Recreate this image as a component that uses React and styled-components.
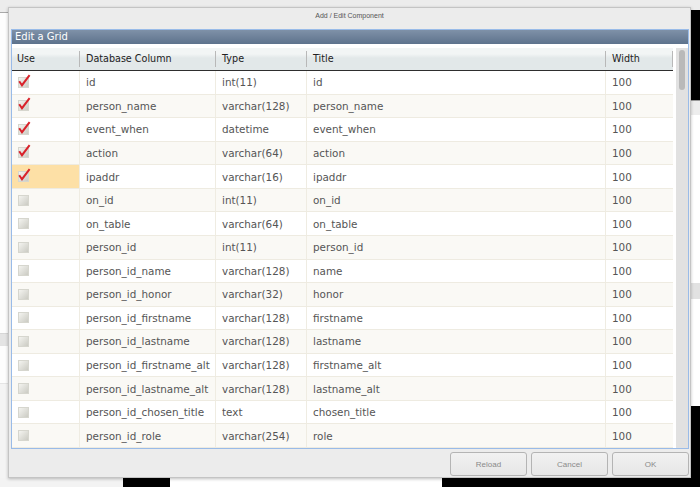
import React from "react";
import styled, { createGlobalStyle } from "styled-components";

const columns = [
  { key: "use", label: "Use", width: 68 },
  { key: "name", label: "Database Column", width: 136 },
  { key: "type", label: "Type", width: 91 },
  { key: "title", label: "Title", width: 299 },
  { key: "width", label: "Width", width: 67 },
];

const rows = [
  ["id", "int(11)", "id", true],
  ["person_name", "varchar(128)", "person_name", true],
  ["event_when", "datetime", "event_when", true],
  ["action", "varchar(64)", "action", true],
  ["ipaddr", "varchar(16)", "ipaddr", true],
  ["on_id", "int(11)", "on_id", false],
  ["on_table", "varchar(64)", "on_table", false],
  ["person_id", "int(11)", "person_id", false],
  ["person_id_name", "varchar(128)", "name", false],
  ["person_id_honor", "varchar(32)", "honor", false],
  ["person_id_firstname", "varchar(128)", "firstname", false],
  ["person_id_lastname", "varchar(128)", "lastname", false],
  ["person_id_firstname_alt", "varchar(128)", "firstname_alt", false],
  ["person_id_lastname_alt", "varchar(128)", "lastname_alt", false],
  ["person_id_chosen_title", "text", "chosen_title", false],
  ["person_id_role", "varchar(254)", "role", false],
];

const SELECTED_ROW = 4;

const CheckBox = ({ checked }) => (
  <svg width="14" height="14" viewBox="0 0 14 14">
    <defs>
      <linearGradient id="cbg" x1="0" y1="0" x2="1" y2="1">
        <stop offset="0" stopColor="#f6f6f2" />
        <stop offset="1" stopColor="#c9c9c1" />
      </linearGradient>
    </defs>
    <rect x="1.5" y="3.5" width="10" height="10" fill="url(#cbg)" stroke="#d6d6ce" />
    {checked && (
      <polyline
        points="2.2,7.2 5,11.2 12.6,1.2"
        fill="none"
        stroke="#d9222a"
        strokeWidth="2"
        strokeLinejoin="miter"
      />
    )}
  </svg>
);

const App = () => {
  return (
    <>
      <GlobalStyle />
      <Desktop>
        <BackPage />
        <BackSide>
          <SideSheet />
        </BackSide>
        <BackStrip>
          <StripPart $tone="#f3f3f3" $w={123} />
          <StripPart $tone="#000" $w={47} />
          <StripPart $tone="#fff" $w={272} />
          <StripPart $tone="#000" $w={258} />
        </BackStrip>
        <Dialog>
          <TitleBar>Add / Edit Component</TitleBar>
          <Panel>
            <PanelHeader>Edit a Grid</PanelHeader>
            <GridBody>
              <Table>
                <HeadRow>
                  {columns.map((c) => (
                    <HeadCell key={c.key} $w={c.width}>
                      {c.label}
                    </HeadCell>
                  ))}
                </HeadRow>
                {rows.map(([name, type, title, used], i) => (
                  <Row key={name} $alt={i % 2 === 1}>
                    <UseCell $w={columns[0].width} $selected={i === SELECTED_ROW}>
                      <CheckBox checked={used} />
                    </UseCell>
                    <Cell $w={columns[1].width}>{name}</Cell>
                    <Cell $w={columns[2].width}>{type}</Cell>
                    <Cell $w={columns[3].width}>{title}</Cell>
                    <Cell $w={columns[4].width}>100</Cell>
                  </Row>
                ))}
              </Table>
              <ScrollBar>
                <Track>
                  <Thumb />
                </Track>
              </ScrollBar>
            </GridBody>
          </Panel>
          <Footer>
            <Button>Reload</Button>
            <Button>Cancel</Button>
            <Button>OK</Button>
          </Footer>
        </Dialog>
      </Desktop>
    </>
  );
};

export default App;

const GlobalStyle = createGlobalStyle`
  html, body {
    margin: 0;
    padding: 0;
    background: #ececec;
    overflow: hidden;
  }
`;

const Desktop = styled.div`
  position: relative;
  width: 700px;
  height: 487px;
  background: #ececec;
  overflow: hidden;
`;

/* the page sitting behind the modal window */
const BackPage = styled.div`
  position: absolute;
  left: 0;
  top: 12px;
  width: 690px;
  height: 466px;
  border-top: 1px solid #a9a9a9;
  background: linear-gradient(
    to bottom,
    #fdfdfd 0,
    #fdfdfd 320px,
    #c9c9c9 320px,
    #e4e4e4 321px,
    #e4e4e4 332px,
    #c9c9c9 332px,
    #fdfdfd 333px,
    #fdfdfd 370px,
    #d6d6d6 370px,
    #f4f4f4 371px
  );
`;

const BackSide = styled.div`
  position: absolute;
  left: 690px;
  top: 10px;
  width: 10px;
  height: 477px;
  background: #000;
  padding-top: 90px;
  box-sizing: border-box;
`;

const SideSheet = styled.div`
  height: 305px;
  border-top: 1px solid #999;
  border-left: 1px solid #999;
  background: linear-gradient(
    to bottom,
    #ededed 0,
    #ededed 14px,
    #fff 14px,
    #fff 182px,
    #e2e2e2 182px,
    #e2e2e2 198px,
    #fff 198px
  );
`;

const BackStrip = styled.div`
  position: absolute;
  left: 0;
  top: 478px;
  width: 700px;
  height: 9px;
  display: flex;
`;

const StripPart = styled.div`
  width: ${(p) => p.$w}px;
  background: ${(p) => p.$tone};
`;

const Dialog = styled.div`
  position: absolute;
  left: 8px;
  top: 7px;
  width: 683px;
  height: 471px;
  box-sizing: border-box;
  background: #ececec;
  border: 1px solid #c4c4c4;
  box-shadow: 0 1px 3px rgba(0, 0, 0, 0.25);
  display: flex;
  flex-direction: column;
`;

const TitleBar = styled.div`
  height: 16px;
  line-height: 16px;
  text-align: center;
  font-family: "Liberation Sans", Arial, sans-serif;
  font-size: 7px;
  color: #555;
  margin-bottom: 5px;
`;

const Panel = styled.div`
  margin: 0 1px 0 2px;
  height: 420px;
  box-sizing: border-box;
  border: 1px solid #99bbe8;
  background: #fff;
  display: flex;
  flex-direction: column;
`;

const PanelHeader = styled.div`
  height: 14px;
  line-height: 14px;
  padding-left: 3px;
  background: linear-gradient(to bottom, #7f91a8, #5d728c);
  color: #fff;
  font-family: "DejaVu Sans", Verdana, sans-serif;
  font-size: 10px;
`;

const GridBody = styled.div`
  flex: 1;
  display: flex;
  min-height: 0;
`;

const Table = styled.div`
  width: 661px;
  display: flex;
  flex-direction: column;
`;

const HeadRow = styled.div`
  display: flex;
  height: 27px;
  box-sizing: border-box;
  border-bottom: 1px solid #2e2e2e;
  background: linear-gradient(
    to bottom,
    #fff 0,
    #fff 4px,
    #f2f5f5 4px,
    #f2f5f5 10px,
    #e2e8e9 14px,
    #e2e8e9 100%
  );
`;

const HeadCell = styled.div`
  position: relative;
  width: ${(p) => p.$w}px;
  box-sizing: border-box;
  padding: 9px 0 0 6px;
  font-family: "DejaVu Sans", Verdana, sans-serif;
  font-size: 9.6px;
  color: #222;
  &:first-child {
    padding-left: 5px;
  }
  &::after {
    content: "";
    position: absolute;
    right: 0;
    top: 7px;
    height: 16px;
    border-right: 1px solid #b8b8b8;
  }
`;

const Row = styled.div`
  display: flex;
  height: 23.5625px;
  box-sizing: border-box;
  border-bottom: 1px solid #eeebe1;
  background: ${(p) => (p.$alt ? "#faf9f5" : "#fff")};
`;

const Cell = styled.div`
  width: ${(p) => p.$w}px;
  box-sizing: border-box;
  padding-left: 6px;
  display: flex;
  align-items: center;
  font-family: "DejaVu Sans", Verdana, sans-serif;
  font-size: 10.4px;
  color: #555;
  border-right: 1px solid #efece2;
  white-space: nowrap;
  &:last-child {
    border-right: none;
  }
`;

const UseCell = styled(Cell)`
  padding-left: 5px;
  padding-bottom: 3px;
  background: ${(p) => (p.$selected ? "#fde0a6" : "transparent")};
`;

const ScrollBar = styled.div`
  flex: 1;
  padding: 4px 0 0 3px;
  background: #fff;
  display: flex;
`;

const Track = styled.div`
  flex: 1;
  background: #e1e1e1;
  display: flex;
  justify-content: center;
  padding-top: 2px;
`;

const Thumb = styled.div`
  width: 6px;
  height: 40px;
  border-radius: 3px;
  background: #b9b9b9;
`;

const Footer = styled.div`
  display: flex;
  justify-content: flex-end;
  gap: 4px;
  padding: 3px 1px 0 0;
`;

const Button = styled.button`
  width: 77px;
  height: 24px;
  box-sizing: border-box;
  border: 1px solid #b4b4b4;
  border-radius: 3px;
  background: linear-gradient(to bottom, #f1f1f1, #e6e6e6);
  font-family: "Liberation Sans", Arial, sans-serif;
  font-size: 8px;
  color: #8a8a8a;
  padding: 0;
`;
